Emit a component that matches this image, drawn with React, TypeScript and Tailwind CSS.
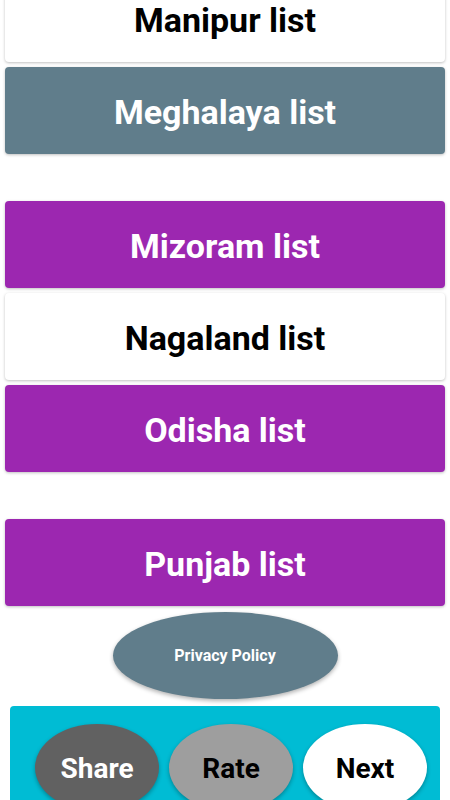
import React from "react";

const cards: { label: string; bg: string; text: string; gapBefore?: boolean }[] = [
  { label: "Manipur list", bg: "bg-white", text: "text-black" },
  { label: "Meghalaya list", bg: "bg-[#607D8B]", text: "text-white" },
  { label: "Mizoram list", bg: "bg-[#9C27B0]", text: "text-white", gapBefore: true },
  { label: "Nagaland list", bg: "bg-white", text: "text-black" },
  { label: "Odisha list", bg: "bg-[#9C27B0]", text: "text-white" },
  { label: "Punjab list", bg: "bg-[#9C27B0]", text: "text-white", gapBefore: true },
];

export default function App() {
  return (
    <div
      className="w-[450px] h-[800px] overflow-hidden bg-white"
      style={{ fontFamily: "Roboto, 'Noto Sans', sans-serif" }}
    >
      <div className="mt-[-25px] flex flex-col px-[5px]">
        {cards.map((c) => (
          <div
            key={c.label}
            className={`${c.gapBefore ? "mt-[47px]" : "mt-[5px]"} first:mt-0 h-[87px] rounded-[4px] ${c.bg} shadow-[0_1px_3px_rgba(0,0,0,0.25)] flex items-center justify-center pt-[3px]`}
          >
            <span className={`${c.text} font-bold text-[34px] leading-none`}>{c.label}</span>
          </div>
        ))}
        <div className="mt-[6px] flex justify-center">
          <div className="w-[225px] h-[87px] rounded-[50%] bg-[#607D8B] shadow-[0_2px_4px_rgba(0,0,0,0.3)] flex items-center justify-center">
            <span className="text-white font-bold text-[16px]">Privacy Policy</span>
          </div>
        </div>
        <div className="mt-[7px] mx-[5px] h-[120px] rounded-[4px] bg-[#00BCD4] pt-[18px] pl-[25px] flex gap-[10px]">
          <div className="w-[124px] h-[87px] rounded-[50%] bg-[#616161] shadow-[0_2px_4px_rgba(0,0,0,0.3)] flex items-center justify-center pt-[2px]">
            <span className="text-white font-bold text-[28px]">Share</span>
          </div>
          <div className="w-[124px] h-[87px] rounded-[50%] bg-[#9E9E9E] shadow-[0_2px_4px_rgba(0,0,0,0.3)] flex items-center justify-center pt-[2px]">
            <span className="text-black font-bold text-[28px]">Rate</span>
          </div>
          <div className="w-[124px] h-[87px] rounded-[50%] bg-white shadow-[0_2px_4px_rgba(0,0,0,0.3)] flex items-center justify-center pt-[2px]">
            <span className="text-black font-bold text-[28px]">Next</span>
          </div>
        </div>
      </div>
    </div>
  );
}
